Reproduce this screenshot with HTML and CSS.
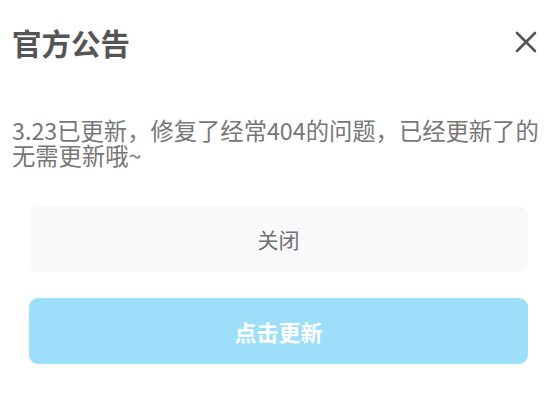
FILE: index.html
```html
<!DOCTYPE html>
<html lang="zh-CN">
<head>
  <meta charset="UTF-8">
  <meta name="viewport" content="width=device-width, initial-scale=1.0">
  <title>官方公告</title>
  <link rel="stylesheet" href="styles.css">
</head>
<body>
  <div class="notice">
    <div class="notice-header">
      <h3>官方公告</h3>
      <button class="close-icon" aria-label="关闭">
        <svg width="22" height="22" viewBox="0 0 22 22">
          <path d="M2 2 L20 20 M20 2 L2 20" stroke="#555" stroke-width="2.6" stroke-linecap="round" fill="none"/>
        </svg>
      </button>
    </div>
    <p class="notice-text">3.23已更新，修复了经常404的问题，已经更新了的无需更新哦~</p>
    <div class="notice-actions">
      <button class="btn btn-close">关闭</button>
      <button class="btn btn-update">点击更新</button>
    </div>
  </div>
</body>
</html>
```

FILE: styles.css
```css
body {
  margin: 0;
  padding: 0;
  background-color: white;
  font-family: "Noto Sans CJK SC", "Noto Sans", sans-serif;
}

.notice {
  width: 560px;
  height: 400px;
  box-sizing: border-box;
}

.notice-header {
  display: flex;
  justify-content: space-between;
  align-items: center;
  padding: 27px 23px 0 12px;
}

.notice-header h3 {
  margin: 0;
  font-size: 29.5px;
  line-height: 30px;
  font-weight: bold;
  color: #555;
}

.close-icon {
  background: none;
  border: none;
  padding: 0;
  display: flex;
  cursor: pointer;
}

.notice-text {
  margin: 61px 0 0 0;
  padding: 0 12px;
  font-size: 23.3px;
  line-height: 25px;
  color: #777;
}

.notice-actions {
  display: flex;
  flex-direction: column;
  gap: 26px;
  padding: 38px 32px 0 29px;
}

.btn {
  height: 66px;
  border: none;
  border-radius: 9px;
  font-family: inherit;
  cursor: pointer;
}

.btn-close {
  background-color: #f8f9fb;
  color: #707070;
  font-size: 21px;
}

.btn-update {
  background-color: #9ddffb;
  color: white;
  font-size: 22px;
  font-weight: bold;
}
```
